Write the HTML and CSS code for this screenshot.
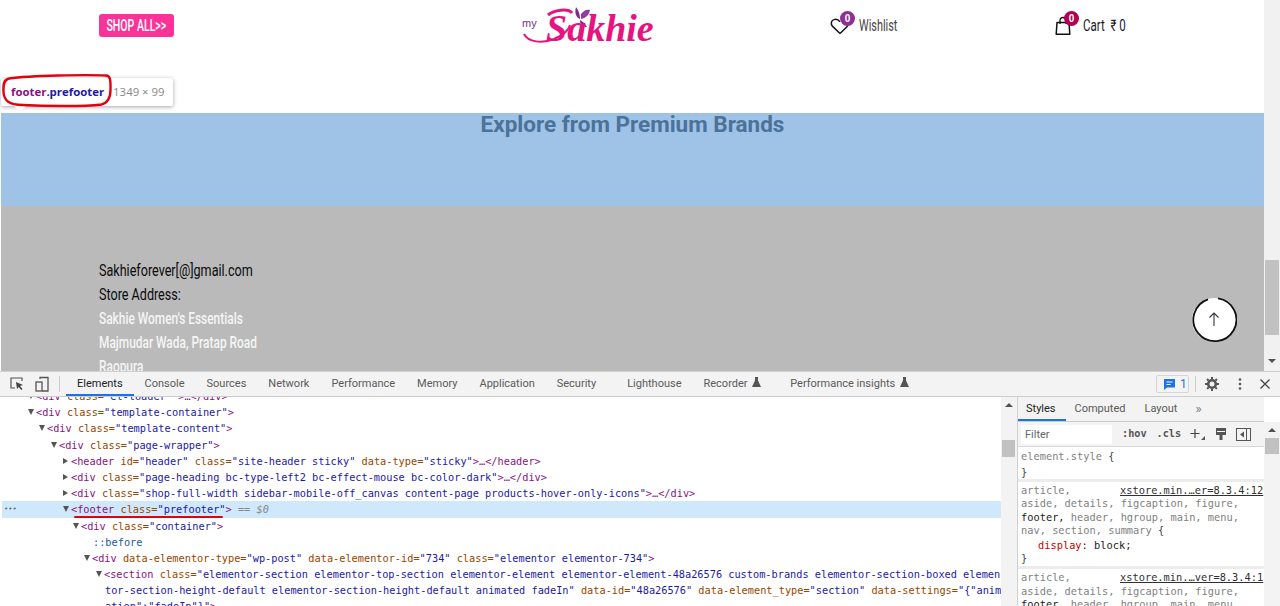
FILE: index.html
```html
<!DOCTYPE html>
<html lang="en">
<head>
<meta charset="utf-8">
<title>footer.prefooter</title>
<link rel="stylesheet" href="styles.css">
</head>
<body>
<div class="top">
  <div class="page">
    <header class="site-header">
      <div class="col-left"><a class="shop-btn"><span class="shop-label">SHOP ALL&gt;&gt;</span></a></div>
      <div class="logo">
        <svg class="logo-art" width="130" height="40" viewBox="0 0 130 40"><path d="M54 1c3 4 4 8 4 12-3-1-6-5-4-12z" fill="#7b2d8e"/><path d="M59 8c3-4 6-5 9-4-1 5-4 8-9 9z" fill="#8e3fa3"/><path d="M58 14c2 1 5 3 7 7-4 0-7-2-7-7z" fill="#7b2d8e"/><path d="M2 28c4 8 18 10 30 5 9-4 15-9 16-14" fill="none" stroke="#e6147f" stroke-width="2"/><path d="M26 9c6-5 20-7 24-2" fill="none" stroke="#e6147f" stroke-width="3"/></svg>
        <span class="logo-my">my</span><span class="logo-name">Sakhie</span>
      </div>
      <div class="hdr-item wish">
        <svg class="hdr-icon" width="20" height="20" viewBox="0 0 20 20"><path d="M10 17.5 2.6 10.4C.4 8.100 1 4.500 4 3.600c2.300-.7 4.600.3 6 2.300" fill="none" stroke="#111" stroke-width="1.500"/><path d="M10 17.500l6.500-6.300c1-1 1.500-2 1.600-3" fill="none" stroke="#111" stroke-width="1.500"/></svg>
        <span class="badge badge-wish">0</span>
        <span class="hdr-text wish-text">Wishlist</span>
      </div>
      <div class="hdr-item cart">
        <svg class="hdr-icon" width="16" height="20" viewBox="0 0 16 20"><path d="M2 6.500h12l.8 11.800H1.200z" fill="none" stroke="#111" stroke-width="1.500" stroke-linejoin="round"/><path d="M5 8V4.500C5 2.700 6.300 1.500 8 1.500s3 1.200 3 3V8" fill="none" stroke="#111" stroke-width="1.300"/></svg>
        <span class="badge badge-cart">0</span>
        <span class="hdr-text cart-text">Cart&nbsp; ₹ 0</span>
      </div>
    </header>
    <section class="brands"><h2>Explore from Premium Brands</h2></section>
    <section class="gray">
      <p class="dark">Sakhieforever[@]gmail.com</p>
      <p class="dark">Store Address:</p>
      <p>Sakhie Women's Essentials</p>
      <p>Majmudar Wada, Pratap Road</p>
      <p>Raopura</p>
    </section>
    <div class="tip">
      <span class="tip-tag">footer</span><span class="tip-class">.prefooter</span><span class="tip-size">1349 × 99</span>
    </div>
    <svg class="tip-ring" width="116" height="40" viewBox="0 0 116 40"><path d="M8 5.500C30 2.500 85 1.500 105 2.500c5 .3 4.500 6 4.500 14 0 9-3 13.500-9 15C80 34 40 33 22 32 8 31.500 3 28 2.500 19 2 11 3 6.500 8 5.500z" fill="none" stroke="#e3000f" stroke-width="2.400"/></svg>
    <svg class="to-top" width="46" height="46" viewBox="0 0 46 46"><circle cx="23" cy="23" r="22" fill="#fff"/><path d="M27 1.400A21.500 21.500 0 1 1 17 2.300" fill="none" stroke="#111" stroke-width="1.800"/><path d="M23 29V16M18.500 20.500 23 16l4.500 4.500" fill="none" stroke="#334" stroke-width="1.100"/></svg>
  </div>
  <div class="page-scroll"><span class="page-thumb"></span><span class="arrow-down"></span></div>
</div>
<div class="devtools">
  <div class="dt-bar">
    <svg class="dt-ic" width="16" height="16" viewBox="0 0 16 16"><path d="M13 5V2H2v10h4" fill="none" stroke="#555" stroke-width="1.200"/><path d="M7 6l7 3-3 1 2.500 3-1.300 1-2.400-3L8 13z" fill="#444"/></svg>
    <svg class="dt-ic" width="16" height="16" viewBox="0 0 16 16"><path d="M6 3V1.500h8V15H8" fill="none" stroke="#555" stroke-width="1.300"/><rect x="2" y="6" width="6" height="9" fill="none" stroke="#555" stroke-width="1.300"/></svg>
    <span class="dt-sep"></span>
    <nav class="dt-tabs">
      <a class="dt-tab active">Elements</a><a class="dt-tab">Console</a><a class="dt-tab">Sources</a><a class="dt-tab">Network</a><a class="dt-tab">Performance</a><a class="dt-tab">Memory</a><a class="dt-tab">Application</a><a class="dt-tab">Security</a><a class="dt-tab far">Lighthouse</a><a class="dt-tab">Recorder <svg class="flask" width="9" height="10" viewBox="0 0 9 10"><path d="M3 0h3v3.500L9 10H0l3-6.500z" fill="#555"/></svg></a><a class="dt-tab far2">Performance insights <svg class="flask" width="9" height="10" viewBox="0 0 9 10"><path d="M3 0h3v3.500L9 10H0l3-6.500z" fill="#555"/></svg></a>
    </nav>
    <div class="dt-right">
      <span class="msg"><svg width="11" height="11" viewBox="0 0 11 11"><path d="M0 0h11v8.500H3L0 11z" fill="#1a73e8"/><path d="M2.500 3h6M2.500 5.500h4" stroke="#fff"/></svg>1</span>
      <span class="dt-sep2"></span>
      <svg class="gear" width="14" height="14" viewBox="0 0 14 14"><circle cx="7" cy="7" r="3.800" fill="none" stroke="#555" stroke-width="2.600"/><path d="M7 0v14M0 7h14M2 2l10 10M12 2 2 12" stroke="#555" stroke-width="2" stroke-dasharray="2.200 9.600"/></svg>
      <svg class="dots" width="4" height="12" viewBox="0 0 4 12"><circle cx="2" cy="1.500" r="1.300" fill="#555"/><circle cx="2" cy="6" r="1.300" fill="#555"/><circle cx="2" cy="10.500" r="1.300" fill="#555"/></svg>
      <svg class="close" width="10" height="10" viewBox="0 0 10 10"><path d="M.5.500l9 9M9.500.500l-9 9" stroke="#444" stroke-width="1.300"/></svg>
    </div>
  </div>
  <div class="dt-body">
    <div class="code">
      <div class="row l0 open clipped"><b>&lt;div</b> <i>class=</i><u>"et-loader"</u> <b>&gt;…&lt;/div&gt;</b></div>
      <div class="row l0 open"><b>&lt;div</b> <i>class=</i><u>"template-container"</u><b>&gt;</b></div>
      <div class="row l1 open"><b>&lt;div</b> <i>class=</i><u>"template-content"</u><b>&gt;</b></div>
      <div class="row l2 open"><b>&lt;div</b> <i>class=</i><u>"page-wrapper"</u><b>&gt;</b></div>
      <div class="row l3 shut"><b>&lt;header</b> <i>id=</i><u>"header"</u> <i>class=</i><u>"site-header sticky"</u> <i>data-type=</i><u>"sticky"</u><b>&gt;…&lt;/header&gt;</b></div>
      <div class="row l3 shut"><b>&lt;div</b> <i>class=</i><u>"page-heading bc-type-left2 bc-effect-mouse bc-color-dark"</u><b>&gt;…&lt;/div&gt;</b></div>
      <div class="row l3 shut"><b>&lt;div</b> <i>class=</i><u>"shop-full-width sidebar-mobile-off_canvas content-page  products-hover-only-icons"</u><b>&gt;…&lt;/div&gt;</b></div>
      <div class="row l3 open sel"><span class="more">•••</span><b>&lt;footer</b> <i>class=</i><u>"prefooter"</u><b>&gt;</b> <em>== $0</em><span class="red-line"></span></div>
      <div class="row l4 open"><b>&lt;div</b> <i>class=</i><u>"container"</u><b>&gt;</b></div>
      <div class="row l5"><span class="pseudo">::before</span></div>
      <div class="row l5 open"><b>&lt;div</b> <i>data-elementor-type=</i><u>"wp-post"</u> <i>data-elementor-id=</i><u>"734"</u> <i>class=</i><u>"elementor elementor-734"</u><b>&gt;</b></div>
      <div class="row l6 open"><b>&lt;section</b> <i>class=</i><u>"elementor-section elementor-top-section elementor-element elementor-element-48a26576 custom-brands elementor-section-boxed elemen</u></div>
      <div class="row l6"><u>tor-section-height-default elementor-section-height-default animated fadeIn"</u> <i>data-id=</i><u>"48a26576"</u> <i>data-element_type=</i><u>"section"</u> <i>data-settings=</i><u>"{"anim</u></div>
      <div class="row l6"><u>ation":"fadeIn"}"</u><b>&gt;</b></div>
    </div>
    <div class="code-scroll"><span class="arrow-up"></span><span class="code-thumb"></span></div>
    <aside class="styles">
      <div class="st-tabs"><a class="st-tab active">Styles</a><a class="st-tab">Computed</a><a class="st-tab">Layout</a><span class="st-more">»</span></div>
      <div class="st-filter">
        <span class="filter-box">Filter</span>
        <span class="flt hov">:hov</span><span class="flt">.cls</span>
        <svg class="flt-plus" width="16" height="14" viewBox="0 0 16 14"><path d="M5 2v9M.5 6.500h9" stroke="#444" stroke-width="1.200"/><path d="M15 9v4h-4z" fill="#555"/></svg>
        <svg class="flt-ic" width="12" height="14" viewBox="0 0 12 14"><path d="M1 1h10v7H1z" fill="#555"/><path d="M2 4.500h8" stroke="#fff"/><path d="M4.500 8h3v5h-3z" fill="#555"/></svg>
        <svg class="flt-ic" width="15" height="13" viewBox="0 0 15 13"><rect x=".5" y=".5" width="14" height="12" fill="none" stroke="#555"/><path d="M10.500 1v11" stroke="#555"/><path d="M8 3.500v6L4 6.500z" fill="#555"/></svg>
      </div>
      <div class="rule first"><div class="sel-line">element.style <span class="br">{</span></div><div class="sel-line br">}</div></div>
      <div class="rule">
        <div class="sel-line">article,<a class="src">xstore.min.…er=8.3.4:12</a></div>
        <div class="sel-line">aside, details, figcaption, figure,</div>
        <div class="sel-line"><span class="hit">footer,</span> header, hgroup, main, menu,</div>
        <div class="sel-line">nav, section, summary <span class="br">{</span></div>
        <div class="decl"><span class="prop">display</span>: block;</div>
        <div class="sel-line br">}</div>
      </div>
      <div class="rule">
        <div class="sel-line">article,<a class="src">xstore.min.…ver=8.3.4:1</a></div>
        <div class="sel-line">aside, details, figcaption, figure,</div>
        <div class="sel-line"><span class="hit">footer,</span> header, hgroup, main, menu,</div>
      </div>
    </aside>
    <div class="st-scroll"><span class="arrow-up"></span><span class="st-thumb"></span></div>
  </div>
</div>
</body>
</html>
```

FILE: styles.css
```css
* { box-sizing: border-box; }
html, body { margin: 0; padding: 0; }
body { width: 1280px; height: 606px; overflow: hidden; background: #fff; font-family: "Liberation Sans", Arial, sans-serif; }

.top { display: flex; height: 371px; }
.page { position: relative; width: 1264px; height: 371px; overflow: hidden; background: #fff; }
.site-header { display: flex; height: 113px; align-items: flex-start; }
.col-left { width: 522px; padding: 14px 0 0 99px; }
.shop-btn { display: block; width: 75px; height: 23px; border-radius: 3px; background: #fb3399; color: #fff; font: 500 16px/23px Roboto, sans-serif; text-align: center; white-space: nowrap; overflow: hidden; }
.shop-label { display: inline-block; transform: scaleX(.66); transform-origin: 50% 50%; margin: 0 -20px; }
.logo { position: relative; width: 130px; height: 46px; margin-top: 6px; color: #e6147f; }
.logo-art { position: absolute; left: 0; top: 0; }
.logo-my { position: absolute; left: 0; top: 11px; font: 11px/12px "Liberation Sans", sans-serif; color: #7b2d8e; }
.logo-name { position: absolute; left: 24px; top: 1px; font: italic bold 38px/42px "Liberation Serif", serif; letter-spacing: 0; }

.hdr-item { position: relative; display: flex; align-items: center; margin-top: 16px; height: 20px; }
.wish { margin-left: 178px; width: 225px; }
.cart { width: 100px; }
.hdr-text { display: inline-block; font: 16px/20px Roboto, sans-serif; transform-origin: 0 50%; white-space: nowrap; }
.wish-text { margin-left: 9px; color: #444; transform: scaleX(.68); }
.cart-text { margin-left: 12px; color: #1a1a2a; transform: scaleX(.72); }
.badge { position: absolute; top: -5px; width: 15px; height: 15px; border-radius: 50%; color: #fff; font: bold 10px/15px "Liberation Sans", sans-serif; text-align: center; }
.badge-wish { left: 10px; background: #8e2e99; }
.badge-cart { left: 9px; background: #b5004f; }

.brands { margin-left: 1px; height: 93px; background: #9fc2e7; text-align: center; }
.brands h2 { margin: 0; font: 700 22.500px/23px Roboto, sans-serif; color: #4b7299; }
.gray { margin-left: 1px; height: 165px; padding: 52px 0 0 98px; background: #bababa; overflow: hidden; }
.gray p { margin: 0; height: 24px; font: 500 17px/24px Roboto, sans-serif; color: #f5f5f5; white-space: nowrap; transform: scaleX(.7); transform-origin: 0 50%; }
.gray p.dark { font-weight: 400; color: #0b0b0b; transform: scaleX(.74); }

.tip { position: absolute; left: 1px; top: 78px; display: flex; align-items: center; width: 172px; height: 28px; padding-left: 10px; background: #fff; border-radius: 2px; box-shadow: 0 1px 4px rgba(0,0,0,.35); font: 11.400px/28px "Open Sans", sans-serif; }
.tip::after { content: ""; position: absolute; left: 13px; top: 28px; border: 6px solid transparent; border-top-color: #fff; border-bottom: 0; }
.tip-tag { color: #881280; font-weight: 700; }
.tip-class { color: #1a1aa6; font-weight: 700; }
.tip-size { margin-left: 9px; color: #888; }
.tip-ring { position: absolute; left: 1px; top: 73px; }
.to-top { position: absolute; left: 1191px; top: 297px; }

.page-scroll { position: relative; width: 16px; height: 371px; background: #f1f1f1; }
.page-thumb { position: absolute; left: 1px; top: 260px; width: 14px; height: 75px; background: #c1c1c1; }
.arrow-down { position: absolute; left: 4px; top: 359px; border: 4px solid transparent; border-top-color: #505050; border-bottom: 0; }
.arrow-up { position: absolute; left: 4px; top: 6px; border: 4px solid transparent; border-bottom-color: #505050; border-top: 0; }

.devtools { height: 235px; display: flex; flex-direction: column; background: #fff; font-family: Roboto, "Liberation Sans", sans-serif; }
.dt-bar { display: flex; align-items: center; height: 26px; padding-left: 9px; background: #f3f3f3; border-top: 1px solid #d0d0d0; border-bottom: 1px solid #cbcdd1; }
.dt-ic { margin-right: 9px; flex: none; }
.dt-sep { width: 1px; height: 16px; background: #ccc; }
.dt-tabs { display: flex; height: 100%; margin-left: 17px; gap: 22px; font-size: 11px; line-height: 23px; color: #5a5a5a; }
.dt-tab { position: relative; white-space: nowrap; }
.dt-tab.active { color: #202124; }
.dt-tab.active::after { content: ""; position: absolute; left: -11px; right: -11px; bottom: 0; height: 2px; background: #1a73e8; }
.dt-tab.far { margin-left: 9px; }
.dt-tab.far2 { margin-left: 7px; }
.flask { margin-left: 2px; }
.dt-right { display: flex; align-items: center; margin-left: auto; padding-right: 10px; }
.msg { display: flex; align-items: center; gap: 5px; width: 33px; height: 18px; padding-left: 7px; border: 1px solid #d6d6d6; border-radius: 2px; font-size: 12px; color: #1a73e8; }
.dt-sep2 { width: 1px; height: 16px; margin: 0 9px 0 6px; background: #ccc; }
.dots { margin-left: 19px; }
.close { margin-left: 18px; }

.dt-body { display: flex; height: 209px; overflow: hidden; }
.code { width: 1001px; margin-top: -9px; overflow: hidden; font: 10.270px/16.200px "DejaVu Sans Mono", monospace; color: #881280; }
.row { position: relative; height: 16.200px; white-space: nowrap; overflow: hidden; }
.row b { font-weight: 400; color: #881280; }
.row i { font-style: normal; color: #994500; }
.row u { text-decoration: none; color: #1a1aa6; }
.row em { font-style: italic; color: #888; }
.clipped { color: #881280; }
.l0 { padding-left: 37px; }
.l1 { padding-left: 48px; }
.l2 { padding-left: 60px; }
.l3 { padding-left: 71px; }
.l4 { padding-left: 82px; }
.l5 { padding-left: 93px; }
.l6 { padding-left: 105px; }
.open::before, .shut::before { content: ""; display: inline-block; width: 0; height: 0; margin-left: -9px; margin-right: 2px; vertical-align: 1px; }
.open::before { border-left: 3.500px solid transparent; border-right: 3.500px solid transparent; border-top: 6px solid #555; }
.shut::before { margin-left: -8px; margin-right: 3px; border-top: 3.500px solid transparent; border-bottom: 3.500px solid transparent; border-left: 5px solid #555; }
.sel { margin-left: 2px; padding-left: 70px; background: #cfe8fc; }
.more { position: absolute; left: 2px; top: 0; font-size: 7px; color: #666; letter-spacing: 0; }
.red-line { position: absolute; left: 72px; top: 14.500px; width: 149px; height: 2px; border-radius: 1px; background: #e3000f; }
.pseudo { color: #1a5a96; }

.code-scroll { position: relative; width: 16px; background: #f3f3f3; }
.code-thumb { position: absolute; left: 1px; top: 43px; width: 13px; height: 17px; background: #c1c1c1; }
.styles { width: 247px; border-left: 1px solid #d0d0d0; font: 10.350px/13.300px "DejaVu Sans Mono", monospace; color: #7f7f7f; }
.st-tabs { display: flex; align-items: center; height: 25px; background: #f3f3f3; border-bottom: 1px solid #cbcdd1; padding-left: 8px; gap: 19px; font: 11px/24px Roboto, sans-serif; color: #5a5a5a; }
.st-tab { position: relative; }
.st-tab.active { color: #202124; }
.st-tab.active::after { content: ""; position: absolute; left: -8px; right: -10px; bottom: 0; height: 2px; background: #1a73e8; }
.st-more { margin-left: -1px; font-size: 13px; color: #777; }
.st-filter { display: flex; align-items: center; height: 25px; padding-left: 3px; background: #f3f3f3; border-bottom: 1px solid #d8d8d8; }
.filter-box { width: 91px; height: 19px; padding-left: 4px; background: #fff; font: 11px/19px Roboto, sans-serif; color: #666; }
.flt { margin-left: 10px; font: bold 10.200px/14px "DejaVu Sans Mono", monospace; color: #555; }
.flt-plus { margin-left: 9px; }
.flt-ic { margin-left: 9px; }
.rule { padding: 2px 0 1px 3px; border-bottom: 3px solid #ececec; }
.rule.first { padding-top: 1px; height: 35px; }
.rule .sel-line { position: relative; white-space: nowrap; }
.rule.first .sel-line { line-height: 16px; }
.br { color: #444; }
.hit { color: #222; }
.src { position: absolute; left: 99px; top: 0; text-decoration: underline; color: #303030; }
.decl { padding: 1px 0 0 17px; line-height: 14px; color: #222; }
.prop { color: #c80000; }
.st-scroll { position: relative; width: 16px; margin-top: 25px; background: #f3f3f3; }
.st-thumb { position: absolute; left: 1px; top: 16px; width: 14px; height: 16px; background: #c1c1c1; }
```
